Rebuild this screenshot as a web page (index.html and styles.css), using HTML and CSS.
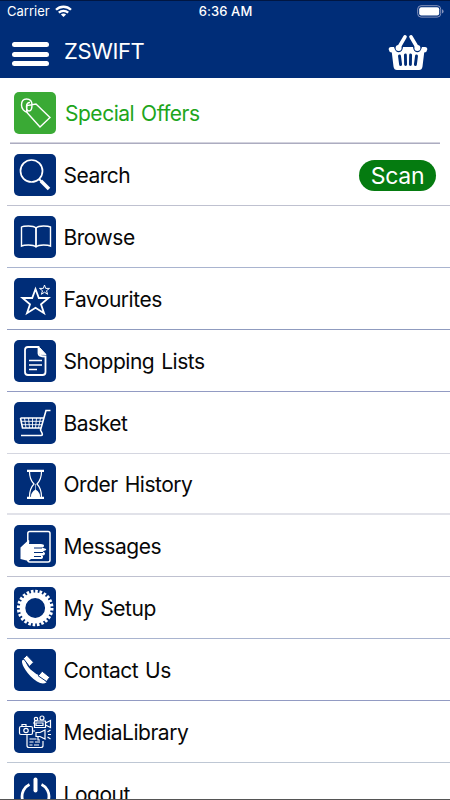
FILE: index.html
```html
<!DOCTYPE html>
<html lang="en">
<head>
<meta charset="utf-8">
<meta name="viewport" content="width=device-width, initial-scale=1">
<title>ZSWIFT</title>
<link rel="stylesheet" href="styles.css">
</head>
<body>
<div class="screen">
<header class="header">
  <div class="status">
    <div class="carrier"><span>Carrier</span>
      <svg width="17" height="13" viewBox="0 0 17 13" fill="none" stroke="#fff" stroke-width="2.3"><path d="M1 4.800C5.200.7 11.800.7 16 4.800M3.800 7.700c2.600-2.500 6.800-2.500 9.400 0"/><path d="M5.900 9.400c1.500-1.200 3.700-1.200 5.200 0L8.500 12z" fill="#fff" stroke="none"/></svg>
    </div>
    <span class="time">6:36 AM</span>
    <svg class="battery" width="27" height="13" viewBox="0 0 27 13"><rect x=".7" y=".7" width="23" height="11.400" rx="3.400" fill="none" stroke="#8794bd"/><rect x="2.200" y="2.200" width="20" height="8.400" rx="2" fill="#fff"/><path d="M25 4.300q1.600.6 1.600 2.100T25 8.500z" fill="#8794bd"/></svg>
  </div>
  <div class="bar">
    <div class="menu"><i></i><i></i><i></i></div>
    <h1>ZSWIFT</h1>
    <svg class="cart" width="40" height="37" viewBox="0 0 40 37"><path d="M10.500 14 17 2.800M29.500 14 23 2.800" stroke="#fff" stroke-width="3.600" stroke-linecap="round"/><path d="M3 13H6Q7.500 18.500 11 18.200Q14.500 18 15 13H25Q25.500 18 29 18.200Q32.500 18.500 34 13H37Q39.500 13 39.300 15.500Q39.100 18 36.200 18.500L34.500 32.500Q34 36 31 36H9Q6 36 5.500 32.500L3.800 18.500Q.9 18 .7 15.500Q.5 13 3 13Z" fill="#fff"/><path d="M11.500 22 12.600 30.500M17.400 21l.2 9.500M22.600 21l-.2 9.500M28.500 22 27.400 30.500" stroke="#002d78" stroke-width="2.900" stroke-linecap="round"/><circle cx="10.600" cy="14" r="3" fill="#fff"/><circle cx="29.400" cy="14" r="3" fill="#fff"/></svg>
  </div>
</header>
<main class="list">
  <div class="row offers"><svg class="icon" viewBox="0 0 42 42" fill="none" stroke="#fff" stroke-width="1.400"><path d="m12.500 20 .5-6.500 9-1.500L36 25.500 26 35zM14 20.500c-4-.5-6.500-4-6.500-7.500 0-4 2-6 5-6 4 0 5.500 3 5.500 6 0 4-1 6-3 6s-2.500-2-2.500-4.500c0-2 1-4 3.500-4"/></svg><span>Special Offers</span></div>
  <div class="row"><svg class="icon" viewBox="0 0 42 42" fill="none" stroke="#fff"><circle cx="17.500" cy="17" r="11" stroke-width="1.700"/><path d="m25 25 3 3" stroke-width="2"/><path d="m27 27 8 8" stroke-width="3.600"/></svg><span>Search</span><button class="scan">Scan</button></div>
  <div class="row l3"><svg class="icon" viewBox="0 0 42 42" fill="none" stroke="#fff" stroke-width="1.400"><path d="M22 12q-2-2-7.500-2-5.500 0-7 1v19q2-1 7-1 5.500 0 7.500 2 2-2 7.500-2 5 0 7 1V11q-2-1-7-1-5.500 0-7.500 2z"/><path d="M22 12v19" stroke-width="1.800"/></svg><span>Browse</span></div>
  <div class="row l4"><svg class="icon" viewBox="0 0 42 42" fill="none" stroke="#fff"><path d="m21.500 11 3.300 9H34.500l-7.500 6.200 3 9-8.500-5.500-8.500 5.500 3-9L8.500 20h9.700z" stroke-width="1.800"/><path d="m30.500 7 1.200 3.400h3.800l-3 2.300 1.100 3.600-3.100-2.100-3.100 2.100 1.100-3.600-3-2.300h3.800z" stroke-width="1"/></svg><span>Favourites</span></div>
  <div class="row l5"><svg class="icon" viewBox="0 0 42 42" fill="none" stroke="#fff"><path d="M24.500 7H14q-3 0-3 3v22q0 3 3 3h14.500q3 0 3-3V16.500q-7 0-7-3z" stroke-width="1.800"/><path d="m25.500 7.500 6.500 7q-6.500 1-6.500-1z" fill="#fff"/><path d="M15 20.500h13M15 25h13M15 29.500h8" stroke-width="1.500"/></svg><span>Shopping Lists</span></div>
  <div class="row light"><svg class="icon" viewBox="0 0 42 42" fill="none" stroke="#fff"><path d="M36.500 8.500H32L26.500 28l1.500 3q1 2.500-1 2.500H7M6.500 16l2 10H27M6.500 16h23" stroke-width="1.600"/><path d="M10.500 16 12 26M14.500 16l1 10M18.500 16v10M22.500 16l-1 10M26.500 16l-2 10M7 19.300h22M8 22.700h20" stroke-width=".9"/></svg><span>Basket</span></div>
  <div class="row light wide"><svg class="icon" viewBox="0 0 42 42" fill="none" stroke="#fff"><path d="M13 7.800h17M13 34.800h17" stroke-width="2.200"/><path d="M15.500 8.500q0 8 4.500 12.500-4.500 4.500-4.500 13M27.500 8.500q0 8-4.500 12.500 4.500 4.500 4.500 13" stroke-width="1.200"/><path d="M17 34q-.5-4.500 4.500-7.500 5 3 4.500 7.500z" fill="#fff" stroke="none"/><path d="M21.500 21v6" stroke-width=".6"/></svg><span>Order History</span></div>
  <div class="row"><svg class="icon" viewBox="0 0 42 42"><rect x="13.800" y="6.500" width="22.200" height="30.500" rx="2" fill="none" stroke="#fff" stroke-width="1.500"/><path d="M13.500 16q2.500-3 1.500 3h12q3 0 3 1.700t-2 1.500 2 1 1 2.200-1.500 1.600q2 .4 1.500 2t-3 1.500q1.500.5 1 2T27 34H17L14.500 36 6.500 34V22.500z" fill="#fff"/><path d="M20 23h8M20 27.500h9M20 31.500h7" stroke="#002d78" stroke-width="1"/></svg><span>Messages</span></div>
  <div class="row l9"><svg class="icon" viewBox="0 0 42 42" fill="none" stroke="#fff"><circle cx="21.200" cy="21" r="12.700" stroke-width="5.600"/><circle cx="21.200" cy="21" r="16.500" pathLength="120" stroke-width="3.600" stroke-dasharray="3 2"/></svg><span>My Setup</span></div>
  <div class="row l10"><svg class="icon" viewBox="0 0 42 42" fill="#fff"><path d="m8 11.500 3-1.500q1 6 5.500 10.500T28 27.500l4.500 6q-4 2.500-9.500-1-7-4.500-11.500-11.500Q7.500 15 8 11.500z"/><path d="m9.300 9.500 3.500-3.300 6.700 7-4 4.300zM24.200 26.800l4-4.600 7.600 6.100-3.300 4.200z" stroke="#002d78" stroke-width="1"/></svg><span>Contact Us</span></div>
  <div class="row l11"><svg class="icon" viewBox="0 0 42 42" fill="none" stroke="#fff" stroke-width="1.200"><rect x="5.500" y="15.500" width="13" height="8" rx="1.500"/><circle cx="12" cy="19.500" r="2.200"/><path d="M8 15v-1.500h4V15M20.500 10h11v6.500h-11zM22 12h7v2.500h-7zM31.500 12l5-2.500v7l-5-2.500M19 12h1.500"/><circle cx="22" cy="8" r="1.700"/><circle cx="28" cy="7" r="2"/><path d="M13 24v10.500q0 2 2 2h12q2 0 2-2V30M18.500 20H21M22 21.500h4l5-2.500v9l-5-2.500h-4zM24 26v3h2M33.500 21l3-2M34 23.500h3M33.500 26l3 2"/><path d="M15.500 28h7M15.500 31h4M21 31h5M15.500 34h3M20 34h5"/></svg><span>MediaLibrary</span></div>
  <div class="row"><svg class="icon" viewBox="0 0 42 42" fill="none" stroke="#fff" stroke-width="2.800"><path d="M15.500 11.500C4.500 16.500 5 35.500 21.500 35.500s17-19 6-24"/><path d="M21.500 6.500v11" stroke-width="4" stroke-linecap="round"/></svg><span>Logout</span></div>
</main>
</div>
</body>
</html>
```

FILE: styles.css
```css
* { box-sizing: border-box; }
body {
  margin: 0;
  background: #fff;
  color: #080808;
  font-family: Inter, "Liberation Sans", sans-serif;
}
.screen {
  height: 800px;
  overflow: hidden;
  display: flex;
  flex-direction: column;
  border-bottom: 1px solid #555;
}
.header {
  height: 78px;
  flex: none;
  background: #002d78;
  border-top: 1px solid #001642;
  color: #fff;
}
.status {
  display: grid;
  grid-template-columns: 1fr auto 1fr;
  align-items: center;
  height: 20px;
  padding: 0 6px 0 7px;
  font-size: 13px;
}
.carrier { display: flex; align-items: center; gap: 5px; }
.time { font-weight: 500; letter-spacing: .1px; }
.battery { justify-self: end; }
.bar { display: flex; height: 57px; padding: 0 22px 0 12px; }
.menu { width: 37px; padding-top: 21px; display: grid; gap: 4.5px; align-content: start; }
.menu i { height: 5px; border-radius: 3px; background: #fff; }
h1 { margin: 16px 0 0 15px; font-size: 22px; line-height: 28px; font-weight: 400; letter-spacing: -.4px; }
.cart { margin: 13px 0 0 auto; }
.list { flex: none; padding-top: 4.25px; }
.row {
  position: relative;
  height: 61.88px;
  display: flex;
  align-items: center;
  padding: 0 14px;
  gap: 7.5px;
  font-size: 21px;
  letter-spacing: -.48px;
  word-spacing: 1.5px;
}
.row span { padding-top: 1px; }
.row::after {
  content: "";
  position: absolute;
  left: 7px;
  right: 0;
  bottom: 0;
  height: 1px;
  background: #bfc1d0;
}
.icon { width: 42px; height: 42px; flex: none; border-radius: 5px; background: #002d78; }
.offers { color: #20a51b; gap: 9px; }
.offers .icon { background: #3aaa35; }
.offers::after {
  left: 10px;
  right: 10px;
  height: 2px;
  background: linear-gradient(#d3d3de 50%, #acacc0 50%);
}
.l3::after, .l9::after { background: #a9b4cf; }
.l4::after { background: #8f9bbf; }
.l5::after, .l10::after { background: #929bc3; }
.light::after { background: #d4d6e0; }
.wide::after { height: 2px; background: #e1e2e9; }
.l11::after { background: #bec7d4; }
.scan {
  margin-left: auto;
  width: 77px;
  height: 31px;
  padding: 0;
  border: 0;
  border-radius: 16px;
  background: #057b10;
  color: #fff;
  font: 23px/33px Inter, sans-serif;
  letter-spacing: -.3px;
}
```
